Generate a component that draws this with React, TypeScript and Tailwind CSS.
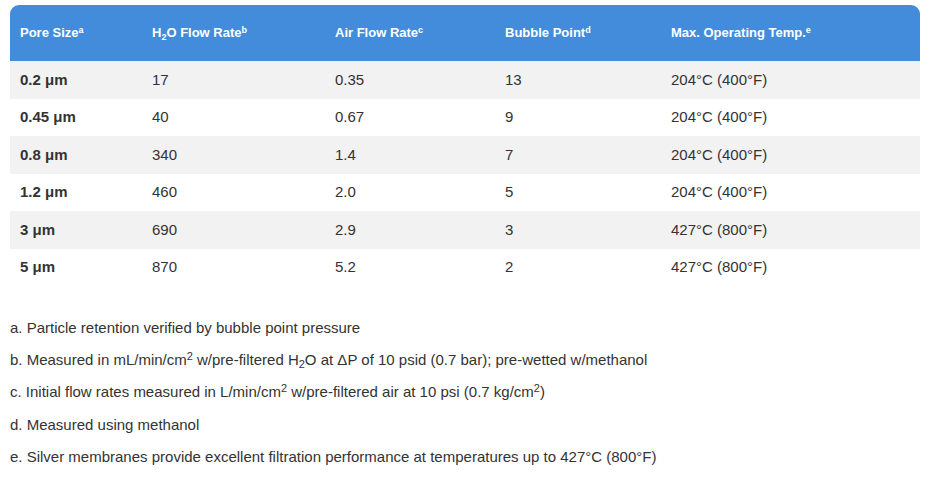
const rows = [
  { size: "0.2 μm", h2o: "17", air: "0.35", bubble: "13", temp: "204°C (400°F)" },
  { size: "0.45 μm", h2o: "40", air: "0.67", bubble: "9", temp: "204°C (400°F)" },
  { size: "0.8 μm", h2o: "340", air: "1.4", bubble: "7", temp: "204°C (400°F)" },
  { size: "1.2 μm", h2o: "460", air: "2.0", bubble: "5", temp: "204°C (400°F)" },
  { size: "3 μm", h2o: "690", air: "2.9", bubble: "3", temp: "427°C (800°F)" },
  { size: "5 μm", h2o: "870", air: "5.2", bubble: "2", temp: "427°C (800°F)" },
];

const Sup = ({ children }: { children: React.ReactNode }) => (
  <sup className="text-[9px]">{children}</sup>
);

const App = () => {
  return (
    <div
      className="w-[934px] h-[481px] bg-white px-[10px] pt-[5px] text-[#333]"
      style={{ fontFamily: '"Liberation Sans", Arial, sans-serif' }}
    >
      <table className="w-[910px] border-collapse table-fixed">
        <colgroup>
          <col className="w-[132px]" />
          <col className="w-[183px]" />
          <col className="w-[170px]" />
          <col className="w-[166px]" />
          <col className="w-[259px]" />
        </colgroup>
        <thead>
          <tr className="h-[56px] text-white text-[13px] font-bold text-left">
            <th className="pl-[10px] bg-[#428cdb] rounded-tl-[9px]">
              Pore Size<Sup>a</Sup>
            </th>
            <th className="pl-[10px] bg-[#428cdb]">
              H<sub className="text-[9px]">2</sub>O Flow Rate<Sup>b</Sup>
            </th>
            <th className="pl-[10px] bg-[#428cdb]">
              Air Flow Rate<Sup>c</Sup>
            </th>
            <th className="pl-[10px] bg-[#428cdb]">
              Bubble Point<Sup>d</Sup>
            </th>
            <th className="pl-[10px] bg-[#428cdb] rounded-tr-[9px]">
              Max. Operating Temp.<Sup>e</Sup>
            </th>
          </tr>
        </thead>
        <tbody className="text-[15px]">
          {rows.map((r, i) => (
            <tr
              key={r.size}
              className={`h-[37.5px] ${i % 2 === 0 ? "bg-[#f2f2f2]" : "bg-white"}`}
            >
              <td className="pl-[10px] font-bold">{r.size}</td>
              <td className="pl-[10px]">{r.h2o}</td>
              <td className="pl-[10px]">{r.air}</td>
              <td className="pl-[10px]">{r.bubble}</td>
              <td className="pl-[10px]">{r.temp}</td>
            </tr>
          ))}
        </tbody>
      </table>

      {/* Footnotes */}
      <div className="mt-[32px] text-[15px] leading-[20px] flex flex-col gap-[12.2px]">
        <p>a. Particle retention verified by bubble point pressure</p>
        <p>
          b. Measured in mL/min/cm<sup className="text-[11px]">2</sup> w/pre-filtered H
          <sub className="text-[11px]">2</sub>O at ΔP of 10 psid (0.7 bar); pre-wetted w/methanol
        </p>
        <p>
          c. Initial flow rates measured in L/min/cm<sup className="text-[11px]">2</sup> w/pre-filtered air at 10 psi (0.7 kg/cm
          <sup className="text-[11px]">2</sup>)
        </p>
        <p>d. Measured using methanol</p>
        <p>e. Silver membranes provide excellent filtration performance at temperatures up to 427°C (800°F)</p>
      </div>
    </div>
  );
};

export default App;
